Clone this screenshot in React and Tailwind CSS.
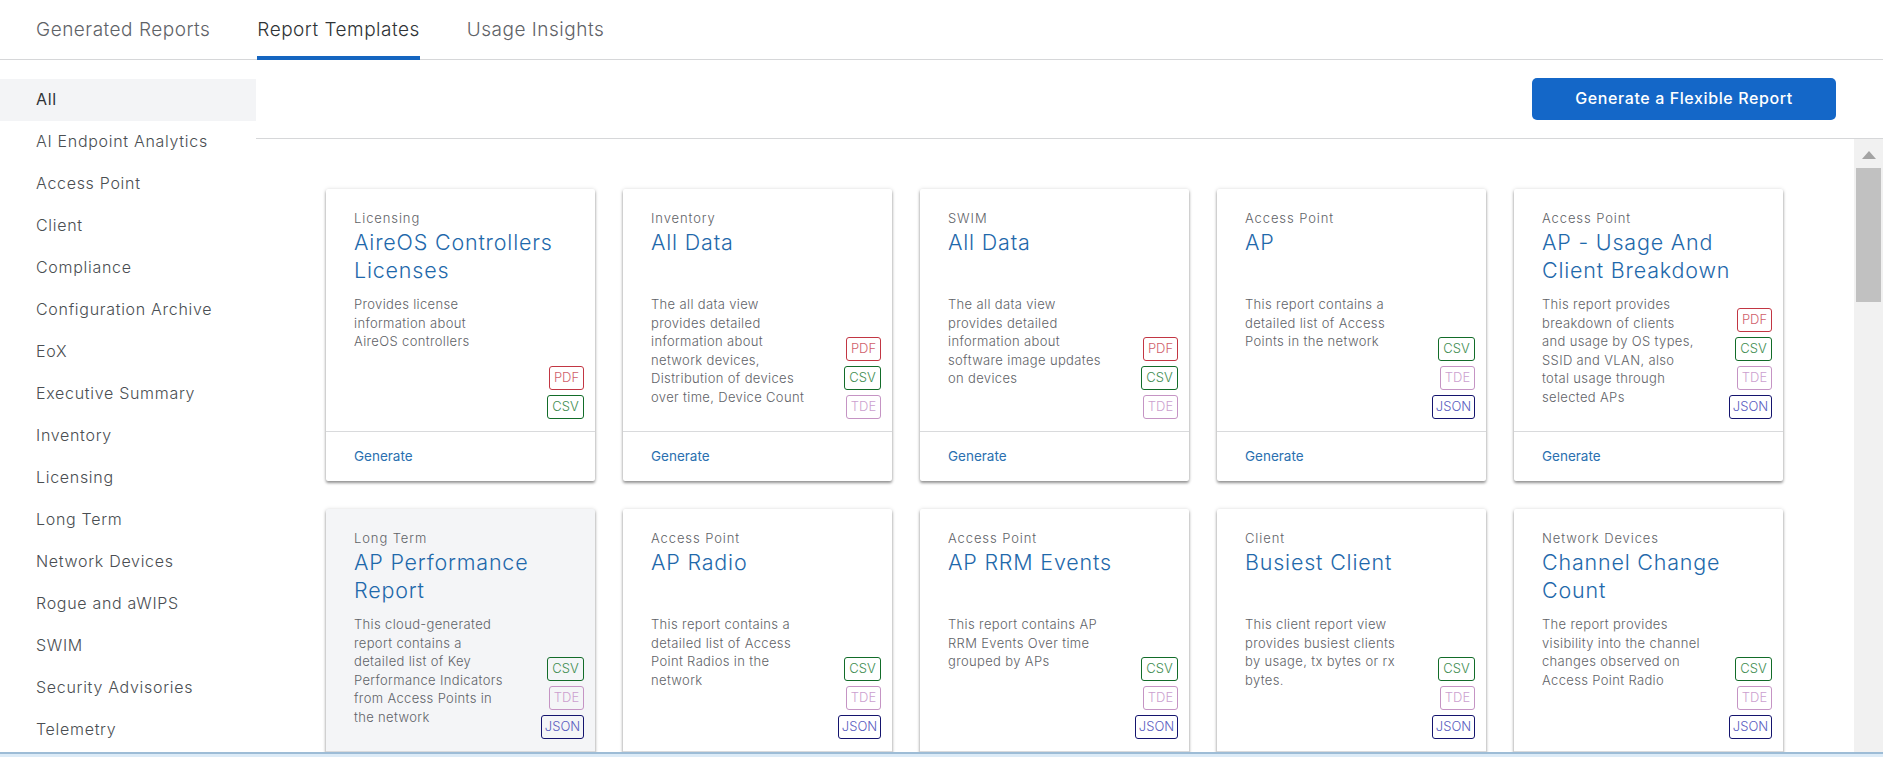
const TABS = ['Generated Reports', 'Report Templates', 'Usage Insights'];

const CATEGORIES = [
  'All', 'AI Endpoint Analytics', 'Access Point', 'Client', 'Compliance', 'Configuration Archive', 'EoX',
  'Executive Summary', 'Inventory', 'Licensing', 'Long Term', 'Network Devices', 'Rogue and aWIPS', 'SWIM',
  'Security Advisories', 'Telemetry',
];

const BADGE_STYLES = {
  PDF: 'w-[35px] border-[#c23643] text-[#d0606a]',
  CSV: 'w-[37px] border-[#126c29] text-[#3e8c50]',
  TDE: 'w-[35px] border-[#c594c4] text-[#cc9fcf]',
  JSON: 'w-[43px] border-[#14146e] text-[#5a5cc0]',
};

const REPORTS = [
  { cat: 'Licensing', title: ['AireOS Controllers', 'Licenses'], desc: ['Provides license', 'information about', 'AireOS controllers'], formats: ['PDF', 'CSV'], action: true },
  { cat: 'Inventory', title: ['All Data'], desc: ['The all data view', 'provides detailed', 'information about', 'network devices,', 'Distribution of devices', 'over time, Device Count'], formats: ['PDF', 'CSV', 'TDE'], action: true },
  { cat: 'SWIM', title: ['All Data'], desc: ['The all data view', 'provides detailed', 'information about', 'software image updates', 'on devices'], formats: ['PDF', 'CSV', 'TDE'], action: true },
  { cat: 'Access Point', title: ['AP'], desc: ['This report contains a', 'detailed list of Access', 'Points in the network'], formats: ['CSV', 'TDE', 'JSON'], action: true },
  { cat: 'Access Point', title: ['AP - Usage And', 'Client Breakdown'], desc: ['This report provides', 'breakdown of clients', 'and usage by OS types,', 'SSID and VLAN, also', 'total usage through', 'selected APs'], formats: ['PDF', 'CSV', 'TDE', 'JSON'], action: true },
  { cat: 'Long Term', title: ['AP Performance', 'Report'], desc: ['This cloud-generated', 'report contains a', 'detailed list of Key', 'Performance Indicators', 'from Access Points in', 'the network'], formats: ['CSV', 'TDE', 'JSON'], hovered: true },
  { cat: 'Access Point', title: ['AP Radio'], desc: ['This report contains a', 'detailed list of Access', 'Point Radios in the', 'network'], formats: ['CSV', 'TDE', 'JSON'] },
  { cat: 'Access Point', title: ['AP RRM Events'], desc: ['This report contains AP', 'RRM Events Over time', 'grouped by APs'], formats: ['CSV', 'TDE', 'JSON'] },
  { cat: 'Client', title: ['Busiest Client'], desc: ['This client report view', 'provides busiest clients', 'by usage, tx bytes or rx', 'bytes.'], formats: ['CSV', 'TDE', 'JSON'] },
  { cat: 'Network Devices', title: ['Channel Change', 'Count'], desc: ['The report provides', 'visibility into the channel', 'changes observed on', 'Access Point Radio'], formats: ['CSV', 'TDE', 'JSON'] },
];

function ReportCard({ report }) {
  return (
    <div className={`flex h-[292px] flex-col rounded-[2px] shadow-[0_2px_3px_rgba(0,0,0,0.4),0_0_4px_rgba(0,0,0,0.12)] ${report.hovered ? 'bg-[#f4f5f7]' : 'bg-white'}`}>
      <div className="flex flex-1 flex-col pl-[28px] pr-[11px] pt-[21px]">
        <div className="text-[13px] leading-[16px] font-light tracking-[0.9px] text-[#5f6368]">{report.cat}</div>
        <div className="mt-[2px] h-[56px] whitespace-nowrap text-[21.5px] leading-[28px] font-light tracking-[0.8px] text-[#1f69ab]">
          {report.title.map((line) => (
            <div key={line}>{line}</div>
          ))}
        </div>
        <div className="mt-[11px] flex items-end justify-between pb-[12px]">
          <div className="h-[124px] whitespace-nowrap text-[13px] leading-[18.6px] font-light tracking-[0.35px] text-[#5f6368]">
            {report.desc.map((line) => (
              <div key={line}>{line}</div>
            ))}
          </div>
          <div className="flex flex-col items-end gap-[5px]">
            {report.formats.map((f) => (
              <span key={f} className={`flex h-[24px] items-center justify-center rounded-[3px] border bg-transparent text-[13px] font-light ${BADGE_STYLES[f]}`}>
                {f}
              </span>
            ))}
          </div>
        </div>
      </div>
      <div className="flex h-[50px] shrink-0 items-center border-t border-[#d9dadc] pb-[1px] pl-[28px] text-[13.5px] font-normal text-[#2a6fb0]">
        {report.action && 'Generate'}
      </div>
    </div>
  );
}

export default function App() {
  return (
    <div className="flex h-screen flex-col overflow-hidden bg-white font-['Inter','Liberation_Sans',sans-serif]">
      {/* top tabs */}
      <div className="flex h-[60px] shrink-0 gap-[47px] border-b border-[#d6d7d9] pl-[36px]">
        {TABS.map((tab, i) => (
          <div
            key={tab}
            className={`flex h-[60px] items-center text-[19px] font-light tracking-[0.5px] ${i === 1 ? 'border-b-[4px] border-[#1565c0] pt-[4px] text-[#2f3336]' : 'text-[#5f6368]'}`}
          >
            {tab}
          </div>
        ))}
      </div>

      <div className="flex min-h-0 flex-1">
        {/* category list */}
        <div className="w-[256px] shrink-0 pt-[19px]">
          {CATEGORIES.map((c, i) => (
            <div
              key={c}
              className={`flex h-[42px] items-center pb-[2px] pl-[36px] text-[16px] font-light tracking-[0.7px] ${i === 0 ? 'bg-[#f3f4f6] font-normal text-[#2f3336]' : 'text-[#4a4e52]'}`}
            >
              {c}
            </div>
          ))}
        </div>

        <div className="flex min-w-0 flex-1 flex-col">
          <div className="flex h-[79px] shrink-0 items-center justify-end border-b border-[#d6d7d9] pr-[47px]">
            <button className="h-[42px] w-[304px] rounded-[5px] bg-[#1467c8] pb-[2px] text-[16px] font-medium tracking-[0.6px] text-white">
              Generate a Flexible Report
            </button>
          </div>

          <div className="flex min-h-0 flex-1">
            <div className="min-w-0 flex-1 overflow-hidden pl-[70px] pt-[50px]">
              <div className="grid w-[1458px] grid-cols-[repeat(5,269px)] gap-x-[28px] gap-y-[28px]">
                {REPORTS.map((r) => (
                  <ReportCard key={r.cat + r.title[0]} report={r} />
                ))}
              </div>
            </div>
            {/* scrollbar */}
            <div className="flex w-[29px] shrink-0 flex-col items-center bg-[#f1f1f1]">
              <svg className="mt-[12px] h-[8px] w-[14px] shrink-0" viewBox="0 0 14 8">
                <polygon points="7,0 14,8 0,8" fill="#a3a3a3" />
              </svg>
              <div className="mt-[9px] h-[134px] w-[25px] bg-[#c1c1c1]" />
            </div>
          </div>
        </div>
      </div>

      {/* strip of the window below */}
      <div className="h-[5px] shrink-0 border-t-[2px] border-[#9dbcd6] bg-[#dcebf7]" />
    </div>
  );
}
